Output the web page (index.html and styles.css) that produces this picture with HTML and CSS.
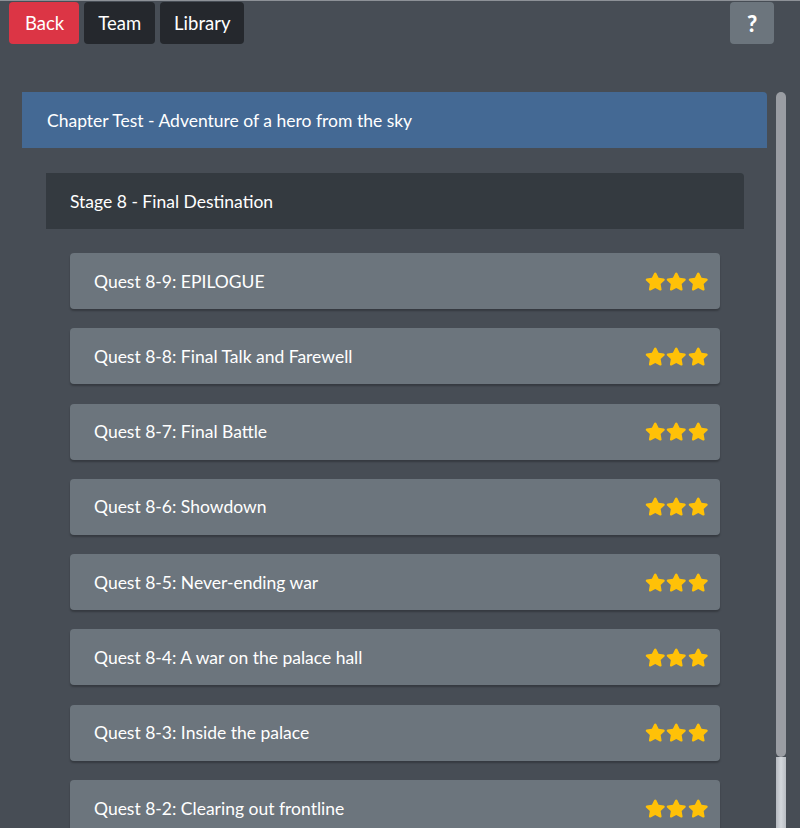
FILE: index.html
```html
<!DOCTYPE html>
<html>
<head>
<meta charset="utf-8">
<link rel="stylesheet" href="styles.css">
</head>
<body>
<header class="topbar">
  <nav class="nav-left">
    <button class="btn btn-red">Back</button>
    <button class="btn btn-dark">Team</button>
    <button class="btn btn-dark">Library</button>
  </nav>
  <button class="btn btn-help">?</button>
</header>
<div class="panel">
  <main class="content">
    <div class="chapter">Chapter Test - Adventure of a hero from the sky</div>
    <section class="stage-block">
      <div class="stage">Stage 8 - Final Destination</div>
      <ul class="quests">
        <li class="quest"><span>Quest 8-9: EPILOGUE</span><span class="stars"><svg viewBox="0 0 576 512"><path d="M259.3 17.8L194 150.2 47.9 171.5c-26.2 3.8-36.7 36.1-17.7 54.6l105.7 103-25 145.5c-4.5 26.3 23.2 46 46.4 33.7L288 439.6l130.7 68.7c23.2 12.2 50.9-7.4 46.4-33.7l-25-145.5 105.7-103c19-18.5 8.5-50.8-17.7-54.6L382 150.2 316.7 17.8c-11.7-23.6-45.600-23.9-57.4 0z"/></svg><svg viewBox="0 0 576 512"><path d="M259.3 17.8L194 150.2 47.9 171.5c-26.2 3.8-36.7 36.1-17.7 54.6l105.7 103-25 145.5c-4.5 26.3 23.2 46 46.4 33.7L288 439.6l130.7 68.7c23.2 12.2 50.9-7.4 46.4-33.7l-25-145.5 105.7-103c19-18.5 8.5-50.8-17.7-54.6L382 150.2 316.7 17.8c-11.7-23.6-45.6-23.9-57.4 0z"/></svg><svg viewBox="0 0 576 512"><path d="M259.3 17.8L194 150.2 47.9 171.5c-26.2 3.8-36.7 36.1-17.7 54.6l105.7 103-25 145.5c-4.5 26.3 23.2 46 46.4 33.7L288 439.6l130.7 68.7c23.2 12.2 50.9-7.4 46.4-33.7l-25-145.5 105.7-103c19-18.5 8.5-50.8-17.7-54.6L382 150.2 316.7 17.8c-11.7-23.6-45.6-23.9-57.4 0z"/></svg></span></li>
        <li class="quest"><span>Quest 8-8: Final Talk and Farewell</span><span class="stars"><svg viewBox="0 0 576 512"><path d="M259.3 17.8L194 150.2 47.9 171.5c-26.2 3.8-36.7 36.1-17.7 54.6l105.7 103-25 145.5c-4.5 26.3 23.2 46 46.4 33.7L288 439.6l130.7 68.7c23.2 12.2 50.9-7.4 46.4-33.7l-25-145.5 105.7-103c19-18.5 8.5-50.8-17.7-54.6L382 150.2 316.7 17.8c-11.7-23.6-45.6-23.9-57.4 0z"/></svg><svg viewBox="0 0 576 512"><path d="M259.3 17.8L194 150.2 47.9 171.5c-26.2 3.8-36.7 36.1-17.7 54.6l105.7 103-25 145.5c-4.5 26.3 23.2 46 46.4 33.7L288 439.6l130.7 68.7c23.2 12.2 50.9-7.4 46.4-33.7l-25-145.5 105.7-103c19-18.5 8.5-50.8-17.7-54.6L382 150.2 316.7 17.8c-11.7-23.6-45.6-23.9-57.4 0z"/></svg><svg viewBox="0 0 576 512"><path d="M259.3 17.8L194 150.2 47.9 171.5c-26.2 3.8-36.7 36.1-17.7 54.6l105.7 103-25 145.5c-4.5 26.3 23.2 46 46.4 33.7L288 439.6l130.7 68.7c23.2 12.2 50.9-7.4 46.4-33.7l-25-145.5 105.7-103c19-18.5 8.5-50.8-17.7-54.6L382 150.2 316.7 17.8c-11.7-23.6-45.6-23.9-57.4 0z"/></svg></span></li>
        <li class="quest"><span>Quest 8-7: Final Battle</span><span class="stars"><svg viewBox="0 0 576 512"><path d="M259.3 17.8L194 150.2 47.9 171.5c-26.2 3.8-36.7 36.1-17.7 54.6l105.7 103-25 145.5c-4.5 26.3 23.2 46 46.4 33.7L288 439.6l130.7 68.7c23.2 12.2 50.9-7.4 46.4-33.7l-25-145.5 105.7-103c19-18.5 8.5-50.8-17.7-54.6L382 150.2 316.7 17.8c-11.7-23.6-45.6-23.9-57.4 0z"/></svg><svg viewBox="0 0 576 512"><path d="M259.3 17.8L194 150.2 47.9 171.5c-26.2 3.8-36.7 36.1-17.7 54.6l105.7 103-25 145.5c-4.5 26.3 23.2 46 46.4 33.7L288 439.6l130.7 68.7c23.2 12.2 50.9-7.4 46.4-33.7l-25-145.5 105.7-103c19-18.5 8.5-50.8-17.7-54.6L382 150.2 316.7 17.8c-11.7-23.6-45.6-23.9-57.4 0z"/></svg><svg viewBox="0 0 576 512"><path d="M259.3 17.8L194 150.2 47.9 171.5c-26.2 3.8-36.7 36.1-17.7 54.6l105.7 103-25 145.5c-4.5 26.3 23.2 46 46.4 33.7L288 439.6l130.7 68.7c23.2 12.2 50.9-7.4 46.4-33.7l-25-145.5 105.7-103c19-18.5 8.5-50.8-17.7-54.6L382 150.2 316.7 17.8c-11.7-23.6-45.6-23.9-57.4 0z"/></svg></span></li>
        <li class="quest"><span>Quest 8-6: Showdown</span><span class="stars"><svg viewBox="0 0 576 512"><path d="M259.3 17.8L194 150.2 47.9 171.5c-26.2 3.8-36.7 36.1-17.7 54.6l105.7 103-25 145.5c-4.5 26.3 23.2 46 46.4 33.7L288 439.6l130.7 68.7c23.2 12.2 50.9-7.4 46.4-33.7l-25-145.5 105.7-103c19-18.5 8.5-50.8-17.7-54.6L382 150.2 316.7 17.8c-11.7-23.6-45.6-23.9-57.4 0z"/></svg><svg viewBox="0 0 576 512"><path d="M259.3 17.8L194 150.2 47.9 171.5c-26.2 3.8-36.7 36.1-17.7 54.6l105.7 103-25 145.5c-4.5 26.3 23.2 46 46.4 33.7L288 439.6l130.7 68.7c23.2 12.2 50.9-7.4 46.4-33.7l-25-145.5 105.7-103c19-18.5 8.5-50.8-17.7-54.6L382 150.2 316.7 17.8c-11.7-23.6-45.6-23.9-57.4 0z"/></svg><svg viewBox="0 0 576 512"><path d="M259.3 17.8L194 150.2 47.9 171.5c-26.2 3.8-36.7 36.1-17.7 54.6l105.7 103-25 145.5c-4.5 26.3 23.2 46 46.4 33.7L288 439.6l130.7 68.7c23.2 12.2 50.9-7.4 46.4-33.7l-25-145.5 105.7-103c19-18.5 8.5-50.8-17.7-54.6L382 150.2 316.7 17.8c-11.7-23.6-45.6-23.9-57.4 0z"/></svg></span></li>
        <li class="quest"><span>Quest 8-5: Never-ending war</span><span class="stars"><svg viewBox="0 0 576 512"><path d="M259.3 17.8L194 150.2 47.9 171.5c-26.2 3.8-36.7 36.1-17.7 54.6l105.7 103-25 145.5c-4.5 26.3 23.2 46 46.4 33.7L288 439.6l130.7 68.7c23.2 12.2 50.9-7.4 46.4-33.7l-25-145.5 105.7-103c19-18.5 8.5-50.8-17.7-54.6L382 150.2 316.7 17.8c-11.7-23.6-45.6-23.9-57.4 0z"/></svg><svg viewBox="0 0 576 512"><path d="M259.3 17.8L194 150.2 47.9 171.5c-26.2 3.8-36.7 36.1-17.7 54.6l105.7 103-25 145.5c-4.5 26.3 23.2 46 46.4 33.7L288 439.6l130.7 68.7c23.2 12.2 50.9-7.4 46.4-33.7l-25-145.5 105.7-103c19-18.5 8.5-50.8-17.7-54.6L382 150.2 316.7 17.8c-11.7-23.6-45.6-23.9-57.4 0z"/></svg><svg viewBox="0 0 576 512"><path d="M259.3 17.8L194 150.2 47.9 171.5c-26.2 3.8-36.7 36.1-17.7 54.6l105.7 103-25 145.5c-4.5 26.3 23.2 46 46.4 33.7L288 439.6l130.7 68.7c23.2 12.2 50.9-7.4 46.4-33.7l-25-145.5 105.7-103c19-18.5 8.5-50.8-17.7-54.6L382 150.2 316.7 17.8c-11.7-23.6-45.6-23.9-57.4 0z"/></svg></span></li>
        <li class="quest"><span>Quest 8-4: A war on the palace hall</span><span class="stars"><svg viewBox="0 0 576 512"><path d="M259.3 17.8L194 150.2 47.9 171.5c-26.2 3.8-36.7 36.1-17.7 54.6l105.7 103-25 145.5c-4.5 26.3 23.2 46 46.4 33.7L288 439.6l130.7 68.7c23.2 12.2 50.9-7.4 46.4-33.7l-25-145.5 105.7-103c19-18.5 8.5-50.8-17.7-54.6L382 150.2 316.7 17.8c-11.7-23.6-45.6-23.9-57.4 0z"/></svg><svg viewBox="0 0 576 512"><path d="M259.3 17.8L194 150.2 47.9 171.5c-26.2 3.8-36.7 36.1-17.7 54.6l105.7 103-25 145.5c-4.5 26.3 23.2 46 46.4 33.7L288 439.6l130.7 68.7c23.2 12.2 50.9-7.4 46.4-33.7l-25-145.5 105.7-103c19-18.5 8.5-50.8-17.7-54.6L382 150.2 316.7 17.8c-11.7-23.6-45.6-23.9-57.4 0z"/></svg><svg viewBox="0 0 576 512"><path d="M259.3 17.8L194 150.2 47.9 171.5c-26.2 3.8-36.7 36.1-17.7 54.6l105.7 103-25 145.5c-4.5 26.3 23.2 46 46.4 33.7L288 439.6l130.7 68.7c23.2 12.2 50.9-7.4 46.4-33.7l-25-145.5 105.7-103c19-18.5 8.5-50.8-17.7-54.6L382 150.2 316.7 17.8c-11.7-23.6-45.6-23.9-57.4 0z"/></svg></span></li>
        <li class="quest"><span>Quest 8-3: Inside the palace</span><span class="stars"><svg viewBox="0 0 576 512"><path d="M259.3 17.8L194 150.2 47.9 171.5c-26.2 3.8-36.7 36.1-17.7 54.6l105.7 103-25 145.5c-4.5 26.3 23.2 46 46.4 33.7L288 439.6l130.7 68.7c23.2 12.2 50.9-7.4 46.4-33.7l-25-145.5 105.7-103c19-18.5 8.5-50.8-17.7-54.6L382 150.2 316.7 17.8c-11.7-23.6-45.6-23.9-57.4 0z"/></svg><svg viewBox="0 0 576 512"><path d="M259.3 17.8L194 150.2 47.9 171.5c-26.2 3.8-36.7 36.1-17.7 54.6l105.7 103-25 145.5c-4.5 26.3 23.2 46 46.4 33.7L288 439.6l130.7 68.7c23.2 12.2 50.9-7.4 46.4-33.7l-25-145.5 105.7-103c19-18.5 8.5-50.8-17.7-54.6L382 150.2 316.7 17.8c-11.7-23.6-45.6-23.9-57.4 0z"/></svg><svg viewBox="0 0 576 512"><path d="M259.3 17.8L194 150.2 47.9 171.5c-26.2 3.8-36.7 36.1-17.7 54.6l105.7 103-25 145.5c-4.5 26.3 23.2 46 46.4 33.7L288 439.6l130.7 68.7c23.2 12.2 50.9-7.4 46.4-33.7l-25-145.5 105.7-103c19-18.5 8.5-50.8-17.7-54.6L382 150.2 316.7 17.8c-11.7-23.6-45.6-23.9-57.4 0z"/></svg></span></li>
        <li class="quest"><span>Quest 8-2: Clearing out frontline</span><span class="stars"><svg viewBox="0 0 576 512"><path d="M259.3 17.8L194 150.2 47.9 171.5c-26.2 3.8-36.7 36.1-17.7 54.6l105.7 103-25 145.5c-4.5 26.3 23.2 46 46.4 33.7L288 439.6l130.7 68.7c23.2 12.2 50.9-7.4 46.4-33.7l-25-145.5 105.7-103c19-18.5 8.5-50.8-17.7-54.6L382 150.2 316.7 17.8c-11.7-23.6-45.6-23.9-57.4 0z"/></svg><svg viewBox="0 0 576 512"><path d="M259.3 17.8L194 150.2 47.9 171.5c-26.2 3.8-36.7 36.1-17.7 54.6l105.7 103-25 145.5c-4.5 26.3 23.2 46 46.4 33.7L288 439.6l130.7 68.7c23.2 12.2 50.9-7.4 46.4-33.7l-25-145.5 105.7-103c19-18.5 8.5-50.8-17.7-54.6L382 150.2 316.7 17.8c-11.7-23.6-45.6-23.9-57.4 0z"/></svg><svg viewBox="0 0 576 512"><path d="M259.3 17.8L194 150.2 47.9 171.5c-26.2 3.8-36.7 36.1-17.7 54.6l105.7 103-25 145.5c-4.5 26.3 23.2 46 46.4 33.7L288 439.6l130.7 68.7c23.2 12.2 50.9-7.4 46.4-33.7l-25-145.5 105.7-103c19-18.5 8.5-50.8-17.7-54.6L382 150.2 316.7 17.8c-11.7-23.6-45.6-23.9-57.4 0z"/></svg></span></li>
      </ul>
    </section>
  </main>
  <div class="scrollbar"><div class="thumb"></div><div class="track-rest"></div></div>
</div>
</body>
</html>
```
FILE: styles.css
```css
html, body {
  margin: 0;
  height: 100%;
  overflow: hidden;
}
body {
  background: #474d55;
  border-top: 1px solid #8d9197;
  box-sizing: border-box;
  font-family: "Lato", "Open Sans", sans-serif;
  color: #fff;
  display: flex;
  flex-direction: column;
}
.topbar {
  display: flex;
  justify-content: space-between;
  align-items: flex-start;
  padding: 1px 26px 0 9px;
  height: 91px;
  flex: none;
  box-sizing: border-box;
}
.nav-left {
  display: flex;
  gap: 5px;
}
.btn {
  font-family: inherit;
  font-size: 18.5px;
  color: #fff;
  border: none;
  border-radius: 4px;
  height: 42px;
  padding: 0 15px;
  cursor: pointer;
}
.btn-red { background: #dc3545; padding: 0 15px 0 16px; }
.btn-dark { background: #25282d; padding: 0 14px; }
.btn-help {
  background: #6c757d;
  width: 44px;
  padding: 0;
  font-weight: 900;
  font-size: 22px;
}
.panel {
  flex: 1;
  min-height: 0;
  display: flex;
  gap: 9px;
  margin: 0 14px 0 22px;
}
.content {
  flex: 1;
  overflow: hidden;
}
.scrollbar {
  width: 10px;
  flex: none;
  display: flex;
  flex-direction: column;
}
.thumb {
  height: 665px;
  background: #9a9da3;
  border-radius: 5px;
  flex: none;
}
.track-rest {
  flex: 1;
  background: linear-gradient(90deg, #b5b9bf, #d3d7dc 50%, #b9bdc3);
}
.chapter {
  background: #446994;
  border-radius: 0 4px 0 0;
  height: 56px;
  display: flex;
  align-items: center;
  padding-left: 25px;
  font-size: 17.5px;
}
.stage-block {
  padding: 25px 23px 20px 24px;
}
.stage {
  background: #343a40;
  border-radius: 0 4px 0 0;
  height: 56px;
  display: flex;
  align-items: center;
  padding-left: 24px;
  font-size: 17.5px;
}
.quests {
  list-style: none;
  margin: 0;
  padding: 24px 24px 0 24px;
  display: flex;
  flex-direction: column;
  gap: 19.3px;
}
.quest {
  background: #6c757d;
  border-radius: 4px;
  height: 56px;
  flex: none;
  display: flex;
  align-items: center;
  justify-content: space-between;
  padding: 0 12px 0 24px;
  font-size: 17.5px;
  box-shadow: 0 2px 2px rgba(0,0,0,0.25);
}
.stars {
  display: flex;
  gap: 1px;
}
.stars svg {
  width: 20.5px;
  height: 19px;
  fill: #ffc107;
}
```
